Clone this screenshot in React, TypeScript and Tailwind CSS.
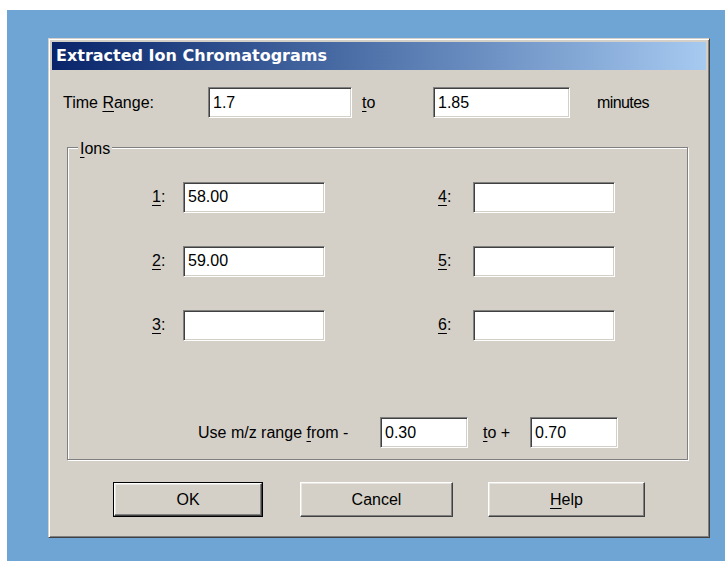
import React from 'react';

// Classic Win2000 "Extracted Ion Chromatograms" dialog

const Key: React.FC<{ children: React.ReactNode }> = ({ children }) => (
  <span className="underline underline-offset-[3px] decoration-1">{children}</span>
);

const Field: React.FC<{ value?: string; className?: string }> = ({ value = '', className = '' }) => (
  <div
    className={`h-[31px] shrink-0 bg-white border border-t-[#808080] border-l-[#808080] border-b-white border-r-white shadow-[inset_1px_1px_0_#404040,inset_-1px_-1px_0_#d4d0c8] pl-[4px] flex items-center text-black ${className}`}
  >
    {value}
  </div>
);

const Button: React.FC<{ children: React.ReactNode; isDefault?: boolean; className?: string }> = ({
  children,
  isDefault = false,
  className = '',
}) => (
  <div className={`h-[35px] shrink-0 ${isDefault ? 'border border-black' : ''} ${className}`}>
    <div className="h-full w-full flex items-center justify-center border border-t-white border-l-white border-b-[#404040] border-r-[#404040] shadow-[inset_-1px_-1px_0_#808080,inset_1px_1px_0_#e8e6e0]">
      {children}
    </div>
  </div>
);

const ions: { n: string; value: string }[][] = [
  [
    { n: '1', value: '58.00' },
    { n: '4', value: '' },
  ],
  [
    { n: '2', value: '59.00' },
    { n: '5', value: '' },
  ],
  [
    { n: '3', value: '' },
    { n: '6', value: '' },
  ],
];

export default function App() {
  return (
    <div className="w-[725px] h-[561px] bg-white pt-[10px] pl-[7px] overflow-hidden font-['Liberation_Sans',Arial,sans-serif] text-[16px] text-black">
      <div className="h-full w-full bg-[#6fa5d5] pt-[28px] pl-[41px]">
        {/* window frame */}
        <div className="w-[662px] h-[500px] bg-[#d4d0c8] border border-t-[#d4d0c8] border-l-[#d4d0c8] border-r-[#404040] border-b-[#404040] shadow-[inset_1px_1px_0_#ffffff,inset_-1px_-1px_0_#808080] p-[3px] flex flex-col">
          <div className="h-[28px] shrink-0 flex items-center pl-[4px] bg-gradient-to-r from-[#0a246a] to-[#a6caf0]">
            <span className="font-['DejaVu_Sans',Verdana,sans-serif] font-bold text-[16px] text-white leading-none">
              Extracted Ion Chromatograms
            </span>
          </div>

          {/* time range */}
          <div className="mt-[17px] flex items-center">
            <span className="ml-[11px] w-[145px]">
              Time <Key>R</Key>ange:
            </span>
            <Field value="1.7" className="w-[144px]" />
            <span className="ml-[10px] w-[71px]">
              <Key>t</Key>o
            </span>
            <Field value="1.85" className="w-[137px]" />
            <span className="ml-[27px] tracking-[-0.6px]">minutes</span>
          </div>

          {/* ions group */}
          <div className="relative mt-[29px] ml-[15px] w-[621px] h-[313px] border border-[#808080] shadow-[inset_1px_1px_0_#ffffff,1px_1px_0_#ffffff] pt-[34px]">
            <span className="absolute -top-[11px] left-[10px] bg-[#d4d0c8] px-[2px]">
              <Key>I</Key>ons
            </span>

            <div className="flex flex-col gap-[34px]">
              {ions.map((row, i) => (
                <div key={i} className="flex items-center h-[30px]">
                  <span className="ml-[84px] w-[31px]">
                    <Key>{row[0].n}</Key>:
                  </span>
                  <Field value={row[0].value} className="w-[142px] h-[30px]" />
                  <span className="ml-[113px] w-[35px]">
                    <Key>{row[1].n}</Key>:
                  </span>
                  <Field value={row[1].value} className="w-[142px] h-[30px]" />
                </div>
              ))}
            </div>

            <div className="mt-[77px] flex items-center">
              <span className="ml-[130px] w-[157px] whitespace-nowrap">
                Use m/z range <Key>f</Key>rom -
              </span>
              <Field value="0.30" className="ml-[25px] w-[88px] h-[30px]" />
              <span className="ml-[15px] w-[47px]">
                <Key>t</Key>o +
              </span>
              <Field value="0.70" className="w-[88px] h-[30px]" />
            </div>
          </div>

          {/* buttons */}
          <div className="mt-[22px] ml-[61px] flex">
            <Button isDefault className="w-[150px]">
              OK
            </Button>
            <Button className="ml-[37px] w-[153px]">Cancel</Button>
            <Button className="ml-[35px] w-[157px]">
              <span>
                <Key>H</Key>elp
              </span>
            </Button>
          </div>
        </div>
      </div>
    </div>
  );
}
